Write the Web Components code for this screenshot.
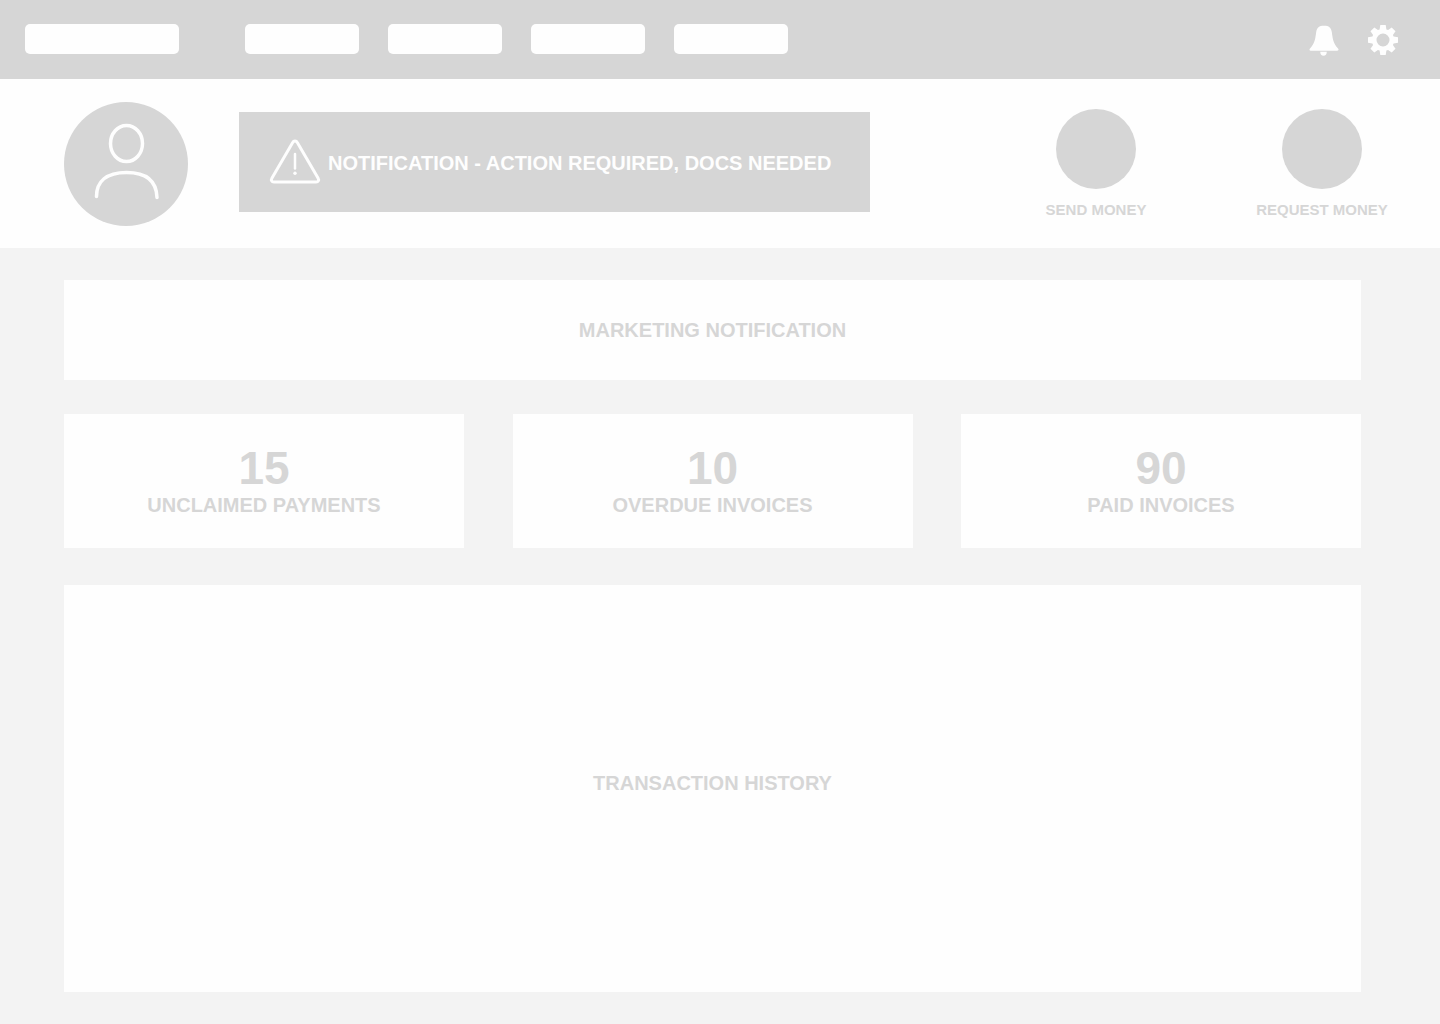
<!DOCTYPE html>
<html><head><meta charset="utf-8"><title>Dashboard wireframe</title>
<style>
html,body{margin:0;padding:0;background:#f3f3f3;font-family:"Liberation Sans",Arial,sans-serif;}
</style></head><body>
<app-shell>
  <top-nav></top-nav>
  <account-header></account-header>
  <main-area>
    <wire-panel h="100">MARKETING NOTIFICATION</wire-panel>
    <stat-row>
      <stat-card value="15">UNCLAIMED PAYMENTS</stat-card>
      <stat-card value="10">OVERDUE INVOICES</stat-card>
      <stat-card value="90">PAID INVOICES</stat-card>
    </stat-row>
    <wire-panel h="407" pb="10">TRANSACTION HISTORY</wire-panel>
  </main-area>
</app-shell>
<script>
function def(name, css, html, init){
  customElements.define(name, class extends HTMLElement{
    constructor(){super();const s=this.attachShadow({mode:'open'});
      s.innerHTML='<style>'+css+'</style>'+(typeof html==='function'?html(this):html);}
    connectedCallback(){ if(init) init(this); }
  });
}
function gearPath(){
  const c=15,R=15,r=10.6,tip=2.7,base=3.4;let d='';
  for(let i=0;i<8;i++){
    const a=i*Math.PI/4,cs=Math.cos(a),sn=Math.sin(a);
    const pt=(x,y)=>((c+x*cs-y*sn).toFixed(2)+' '+(c+x*sn+y*cs).toFixed(2));
    d+=(i?'L':'M')+pt(-base,-r)+'L'+pt(-tip,-R)+'L'+pt(tip,-R)+'L'+pt(base,-r);
  }
  return d+'zM15 8.500a6.500 6.500 0 1 0 0 13a6.500 6.500 0 0 0 0-13z';
}
def('app-shell',':host{display:block;width:1440px;height:1024px;overflow:hidden;background:#f3f3f3}','<slot></slot>');
def('top-nav',`:host{display:flex;align-items:center;height:79px;background:#d6d6d6;box-sizing:border-box;padding:0 42px 1px 25px}
.p{height:30px;background:#fefefe;border-radius:5px;width:114px;margin-right:29px}
.p.logo{width:154px;margin-right:66px}
.sp{flex:1}
svg{display:block;fill:#fefefe;margin-top:2px}
.bell{margin-right:29px}`,
`<div class="p logo"></div><div class="p"></div><div class="p"></div><div class="p"></div><div class="p"></div><div class="sp"></div>
<svg class="bell" width="30" height="32" viewBox="0 0 30 32"><path d="M15 1.700C20 1.700 22 3.500 22.800 8C23.600 14 24 19 29 24.500C30 25.500 29.500 26.700 28 26.700H1.800C.5 26.700 0 25.500 1 24.500C6 19 6.400 14 7.200 8C8 3.500 10 1.700 15 1.700z"/><path d="M11.200 27.700h6.600c0 2.500-1.300 4-3.300 4s-3.300-1.500-3.300-4z"/></svg>
<svg width="30" height="30" viewBox="0 0 30 30"><path fill-rule="evenodd" d="${gearPath()}"/></svg>`);
def('account-header',`:host{display:flex;height:169px;background:#fefefe;box-sizing:border-box;padding-left:64px;position:relative}
.av{width:124px;height:124px;border-radius:50%;background:#d6d6d6;margin-top:23px;margin-right:51px;flex:none}
svg{display:block}
.banner{width:631px;height:100px;margin-top:33px;background:#d6d6d6;display:flex;align-items:center;box-sizing:border-box;padding-left:30px;color:#fefefe;font:bold 20px "Liberation Sans",Arial,sans-serif;white-space:nowrap;flex:none}
.banner svg{margin-right:7px;flex:none;margin-top:-1px}
.banner span{margin-top:2px}
.acts{display:flex;margin-left:146px}
.act{width:160px;margin-right:66px;margin-top:30px;display:flex;flex-direction:column;align-items:center;color:#d6d6d6;font:bold 15px "Liberation Sans",Arial,sans-serif;white-space:nowrap}
.c{width:80px;height:80px;border-radius:50%;background:#d6d6d6;margin-bottom:12px}
.act span{line-height:18px}`,
`<div class="av"><svg width="124" height="124" viewBox="0 0 124 124" fill="none" stroke="#fefefe" stroke-width="3.500" stroke-linecap="round"><ellipse cx="62.500" cy="41.500" rx="16" ry="18"/><path d="M32.500 94.500c0-15 10-24 30-24s30 9 30.500 25"/></svg></div>
<div class="banner"><svg width="52" height="48" viewBox="0 0 52 48" fill="none" stroke="#fefefe" stroke-width="3" stroke-linecap="round" stroke-linejoin="round"><path d="M26 3c-1 0-1.800.5-2.300 1.500L3 40c-1.300 2.300-.3 4 2 4H47c2.300 0 3.300-1.700 2-4L28.300 4.500C27.800 3.500 27 3 26 3z"/><path d="M26 16v14.500" stroke-width="2.500"/><circle cx="26" cy="35.200" r="1.700" fill="#fefefe" stroke="none"/></svg><span>NOTIFICATION - ACTION REQUIRED, DOCS NEEDED</span></div>
<div class="acts"><div class="act"><div class="c"></div><span>SEND MONEY</span></div><div class="act"><div class="c"></div><span>REQUEST MONEY</span></div></div>`);
def('main-area',':host{display:block;box-sizing:border-box;width:1297px;margin-left:64px;padding-top:32px}','<slot></slot>');
def('wire-panel',`:host{display:flex;align-items:center;justify-content:center;box-sizing:border-box;background:#fefefe;color:#d6d6d6;font:bold 20px "Liberation Sans",Arial,sans-serif}`,'<slot></slot>',el=>{el.style.height=el.getAttribute('h')+'px';el.style.paddingBottom=(el.getAttribute('pb')||0)+'px';});
def('stat-row',':host{display:flex;justify-content:space-between;margin:34px 0 37px}','<slot></slot>');
def('stat-card',`:host{display:flex;flex-direction:column;align-items:center;width:400px;height:134px;background:#fefefe;color:#d6d6d6;font:bold 20px "Liberation Sans",Arial,sans-serif;box-sizing:border-box;padding-top:27px}
.v{font-size:46px;line-height:54px}
.l{line-height:26px;margin-top:-3px}`,
el=>`<div class="v">${el.getAttribute('value')||''}</div><div class="l"><slot></slot></div>`);
</script>
</body></html>
